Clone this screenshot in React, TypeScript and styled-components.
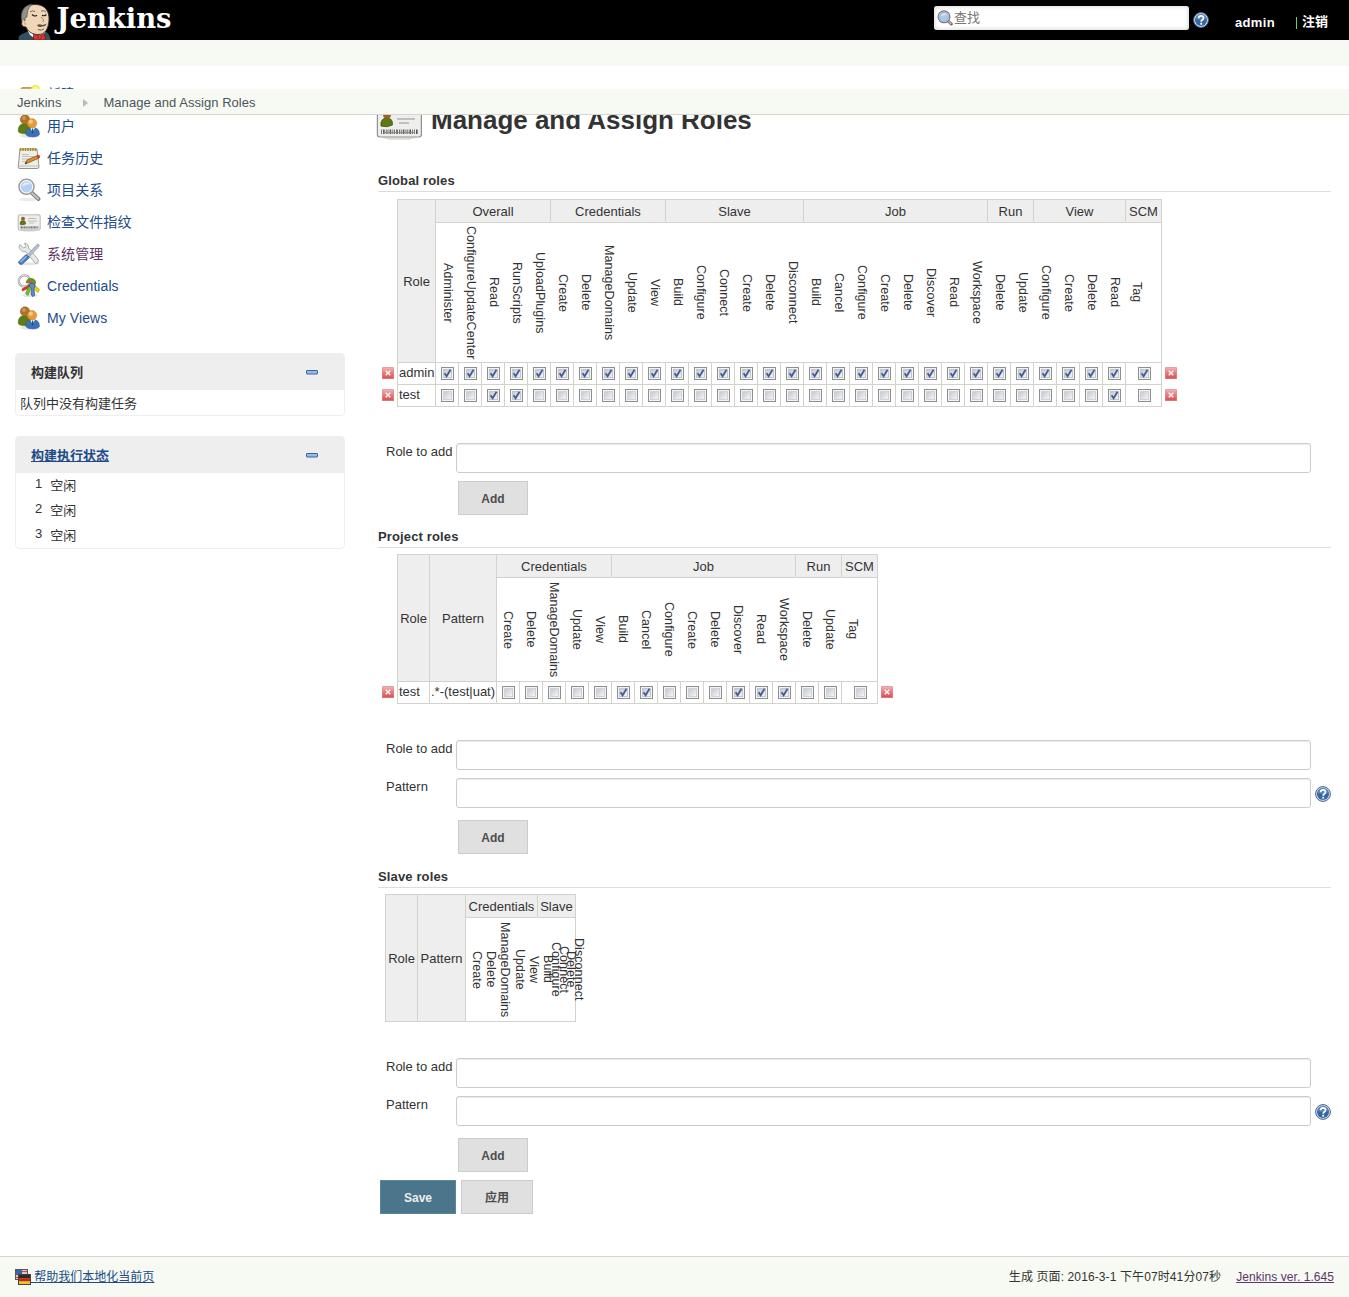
import React from "react";
import styled, { createGlobalStyle } from "styled-components";

const sans = `"Liberation Sans", Arial, "Noto Sans CJK SC", sans-serif`;
const line = "#d3d3cc";
const tint = "#f6faf2";

const Global = createGlobalStyle`
  * { box-sizing: border-box; }
  body { margin: 0; background: #fff; color: #333; font: 13px/16px ${sans}; }
  svg { display: block; flex: none; }
`;

const Page = styled.div`
  width: 1349px;
  height: 1297px;
  display: flex;
  flex-direction: column;
  overflow: hidden;
`;

/* ---------- header ---------- */
const Header = styled.header`
  flex: none;
  height: 40px;
  background: #000;
  display: flex;
  padding: 0 21px 0 18px;
  overflow: hidden;
`;
const Logo = styled.a`
  display: flex;
  margin-right: auto;
`;
const Search = styled.label`
  display: flex;
  align-items: center;
  width: 255px;
  height: 24px;
  margin: 6px 4px 0 0;
  padding: 0 3px;
  border-radius: 3px;
  background: #fff;
  box-shadow: inset 0 0 5px #ccc;
  gap: 1px;
`;
const SearchInput = styled.input`
  flex: 1;
  min-width: 0;
  border: 0;
  padding: 0;
  outline: 0;
  background: transparent;
  font: 13px/20px ${sans};
  &::placeholder { color: #777; opacity: 1; }
`;
const HelpSlot = styled.span`
  display: block;
  margin-top: ${(p: { $top: number }) => p.$top}px;
`;
const UserLink = styled.a`
  margin: 15px 0 0 26px;
  color: #fff;
  font-weight: bold;
  letter-spacing: 0.35px;
`;
const Logout = styled.a`
  display: flex;
  gap: 5px;
  align-items: center;
  height: 16px;
  margin: 14px 0 0 21px;
  color: #fff;
  font-weight: bold;
  &::before { content: ""; width: 1px; height: 12px; margin-top: 2px; background: #6fce5f; }
`;
const Band = styled.div`
  flex: none;
  height: 26px;
  background: ${tint};
`;
const Breadcrumbs = styled.nav`
  position: absolute;
  z-index: 2;
  top: 89px;
  left: 0;
  width: 1349px;
  height: 26px;
  display: flex;
  align-items: center;
  padding: 2px 17px 0;
  background: ${tint};
  border-bottom: 1px solid #d3d7cf;
  color: #4d545d;
  letter-spacing: 0.05px;
`;
const Arrow = styled.span`
  border: 4px solid transparent;
  border-left: 5px solid #bbb;
  border-right: 0;
  margin: 0 15px 0 22px;
`;

/* ---------- sidebar ---------- */
const Body = styled.div`
  flex: 1;
  min-height: 0;
  display: flex;
`;
const Side = styled.aside`
  flex: none;
  width: 375px;
  padding: 12px 30px 0 15px;
`;
const Task = styled.a<{ $visited?: boolean }>`
  display: flex;
  align-items: center;
  gap: 6px;
  height: 32px;
  padding-left: 2px;
  font-size: 14px;
  letter-spacing: 0.08px;
  color: ${(p) => (p.$visited ? "#5c3566" : "#204a87")};
`;
const Panel = styled.section<{ $top: number }>`
  margin-top: ${(p) => p.$top}px;
  border: 1px solid #eee;
  border-radius: 4px;
  overflow: hidden;
`;
const PanelHead = styled.div`
  height: 36px;
  background: #eee;
  display: flex;
  align-items: center;
  justify-content: space-between;
  padding: 0 26px 0 15px;
  font-weight: bold;
`;
const PanelTitle = styled.span<{ $link?: boolean }>`
  padding-top: 2px;
  ${(p) => p.$link && "color: #204a87; text-decoration: underline;"}
`;
const Empty = styled.div`
  height: 25px;
  padding: 6px 4px 0;
`;
const Executor = styled.div`
  display: flex;
  gap: 8px;
  height: 25px;
  padding: 3px 0 0 19px;
`;
const ExecutorState = styled.span`
  padding-top: 2px;
`;

/* ---------- main ---------- */
const Main = styled.main`
  flex: 1;
  padding: 31px 18px 0 0;
`;
const Title = styled.div`
  height: 48px;
  display: flex;
  gap: 8px;
`;
const H1 = styled.h1`
  margin: 8px 0 0;
  font: bold 26px/30px ${sans};
  letter-spacing: -0.02px;
  color: #333;
`;
const SectionHead = styled.h2<{ $top: number; $gap: number }>`
  height: 23px;
  margin: ${(p) => p.$top}px 0 ${(p) => p.$gap}px 3px;
  padding-top: 1px;
  border-bottom: 1px solid #ddd;
  font: bold 13px/22px ${sans};
  letter-spacing: 0.14px;
`;
const TableWrap = styled.div<{ $left: number }>`
  display: flex;
  align-items: flex-end;
  gap: 3px;
  padding-left: ${(p) => p.$left}px;
`;
const DeleteColumn = styled.div`
  display: flex;
  flex-direction: column;
  gap: 10px;
  padding-bottom: 6px;
`;
const Matrix = styled.div<{ $cols: string; $rows: string }>`
  display: grid;
  grid-template-columns: ${(p) => p.$cols};
  grid-template-rows: ${(p) => p.$rows};
  border-right: 1px solid ${line};
  border-bottom: 1px solid ${line};
`;
const HeadCell = styled.div<{ $span?: number; $tall?: boolean }>`
  grid-column: span ${(p) => p.$span || 1};
  grid-row: span ${(p) => (p.$tall ? 2 : 1)};
  display: flex;
  align-items: center;
  justify-content: center;
  white-space: nowrap;
  padding-top: 1px;
  background: #eee;
  border-left: 1px solid ${line};
  border-top: 1px solid ${line};
`;
const PermGroup = styled.div<{ $span: number; $first: boolean; $pad: number }>`
  grid-column: span ${(p) => p.$span};
  display: flex;
  min-width: 0;
  border-top: 1px solid ${line};
  border-left: 1px solid ${(p) => (p.$first ? line : "transparent")};
  padding-left: ${(p) => p.$pad}px;
`;
const PermName = styled.div<{ $w: number }>`
  flex: none;
  width: ${(p) => p.$w}px;
  display: flex;
  align-items: center;
`;
const Vertical = styled.span`
  flex: none;
  writing-mode: vertical-rl;
  font-size: 12.5px;
  letter-spacing: 0.07px;
  line-height: 16px;
  white-space: nowrap;
`;
const Cell = styled.div<{ $pad: number }>`
  display: flex;
  align-items: center;
  white-space: nowrap;
  border-left: 1px solid ${line};
  border-top: 1px solid ${line};
  padding-left: ${(p) => p.$pad}px;
`;
const CellText = styled.span`
  margin-top: -1px;
`;
const Form = styled.form`
  display: flex;
  flex-direction: column;
  gap: 8px;
  margin: 36px 0 0 11px;
`;
const FieldRow = styled.div`
  display: flex;
  height: 30px;
`;
const FieldLabel = styled.label`
  width: 70px;
  padding-top: 1px;
`;
const Input = styled.input`
  width: 855px;
  height: 30px;
  margin-right: 4px;
  border: 1px solid #ccc;
  border-radius: 3px;
  box-shadow: inset 0 1px 1px rgba(0, 0, 0, 0.08);
  outline: 0;
`;
const Button = styled.button<{ $w: number; $primary?: boolean }>`
  width: ${(p) => p.$w}px;
  height: 34px;
  padding: 2px 0 0;
  border: 1px solid ${(p) => (p.$primary ? "#5788a1" : "#ccc")};
  background: ${(p) => (p.$primary ? "#4b758b" : "#e0e0e0")};
  color: ${(p) => (p.$primary ? "#eee" : "#4d4d4d")};
  font: bold 12px/16px ${sans};
`;
const AddSlot = styled.div<{ $top: number }>`
  display: flex;
  margin: ${(p) => p.$top}px 0 0 72px;
`;
const Actions = styled.div`
  display: flex;
  gap: 5px;
  margin: 8px 0 0 5px;
`;

/* ---------- footer ---------- */
const Footer = styled.footer`
  flex: none;
  height: 41px;
  border-top: 1px solid #d3d7cf;
  background: ${tint};
  display: flex;
  align-items: center;
  padding: 0 15px;
  font-size: 12px;
`;
const Translate = styled.a`
  display: flex;
  align-items: center;
  margin-right: auto;
  color: #204a87;
  text-decoration: underline;
  white-space: pre;
`;
const Generated = styled.span`
  letter-spacing: 0.11px;
`;
const Version = styled.a`
  margin-left: 15px;
  color: #5c3566;
  text-decoration: underline;
  letter-spacing: 0.06px;
`;

/* ---------- icons ---------- */
const LogoArt = () => (
  <svg width="156" height="40" viewBox="0 0 156 40">
    <path d="M0.500 40L1 36Q5 33 10 31.500L28 32Q32 34 32.500 40Z" fill="#335061" />
    <path d="M9 29L12 35L19 40H25L27 31Z" fill="#fff" />
    <path d="M4 22C1.500 10 7 4.500 17 4.500C27 4.500 31.500 11 31 20C30.500 29 27 34.500 20 34.500C13 34.500 10 31 8 27C4 27 3 24 4 22Z" fill="#f0d6b7" stroke="#3a3026" strokeWidth="0.900" />
    <path d="M3.500 20C2.500 10 7 4.500 15 4.300C10.500 7 9.500 10 9 17L7 18V21C5 19 4.500 19 3.500 20Z" fill="#8f8f8c" stroke="#444" strokeWidth="0.600" />
    <path d="M12 12Q14.500 10 17 11.500M23 11Q26 10 28 12" fill="none" stroke="#6d6b6d" strokeWidth="1" />
    <path d="M14 14.500Q16.500 17 19 15.200M24 15.200Q26.500 16.500 28.500 14.500" fill="none" stroke="#222" strokeWidth="1.100" />
    <path d="M23 17Q27 20 25 22" fill="none" stroke="#a6764f" strokeWidth="0.900" />
    <path d="M19 25Q22 23.500 24 25Q27 24.500 28.500 23.500Q28 27 24 26.500Q20 28 19 25Z" fill="#555" />
    <path d="M20 29.500Q23.500 31 26 29" fill="none" stroke="#6d4c3d" strokeWidth="0.900" />
    <path d="M6 21.500Q7.500 22.500 7 25" fill="none" stroke="#b98b67" strokeWidth="0.800" />
    <path d="M15.500 34L21 36L26.500 33.500L27.500 40H15.500Z" fill="#d33833" stroke="#5f1a15" strokeWidth="0.700" />
    <ellipse cx="21.700" cy="37" rx="1.700" ry="2.200" fill="#ef3d3a" stroke="#7f1d19" strokeWidth="0.700" />
    <text x="38.500" y="28.400" fill="#fff" fontFamily="DejaVu Serif, serif" fontWeight="bold" fontSize="27" textLength="115" lengthAdjust="spacingAndGlyphs">Jenkins</text>
  </svg>
);
const HelpIcon = () => (
  <svg width="16" height="16" viewBox="0 0 16 16">
    <circle cx="8" cy="8" r="7.400" fill="#d7e0ea" stroke="#47648c" strokeWidth="1" />
    <circle cx="8" cy="8" r="6" fill="#3465a4" />
    <path d="M2.500 7A5.500 5.500 0 0 1 13.500 7Q8 9 2.500 7Z" fill="#6f94c4" opacity="0.600" />
    <path d="M5.600 6.200Q5.800 3.800 8 3.800Q10.500 3.800 10.500 6Q10.500 7.200 9.200 8Q8.200 8.600 8.200 9.800" fill="none" stroke="#fff" strokeWidth="1.700" />
    <rect x="7.300" y="10.800" width="1.800" height="1.900" fill="#fff" />
  </svg>
);
const SearchLens = () => (
  <svg width="16" height="16" viewBox="0 0 16 16">
    <path d="M11 11L14.300 14" stroke="#666" strokeWidth="3" strokeLinecap="round" />
    <path d="M11.500 11.500L14 13.700" stroke="#c4c4c0" strokeWidth="1.200" strokeLinecap="round" />
    <circle cx="7" cy="6.800" r="5.900" fill="#e8ebe8" stroke="#777" strokeWidth="1.200" />
    <circle cx="7" cy="6.800" r="4.500" fill="#a9c8f0" stroke="#8a9bb0" strokeWidth="0.600" />
    <path d="M3.800 6.500Q4.500 3.500 7.500 3.500Q9.500 3.500 10 4.800Q6.500 4.800 3.800 6.500Z" fill="#dcebfb" />
  </svg>
);
const Lens = () => (
  <svg width="24" height="24" viewBox="0 0 24 24">
    <ellipse cx="11" cy="21.500" rx="9" ry="1.800" fill="#000" opacity="0.080" />
    <path d="M14.500 14.500L21.500 21" stroke="#777" strokeWidth="3.800" strokeLinecap="round" />
    <path d="M15 15L21.200 20.700" stroke="#c4c4c0" strokeWidth="2.200" strokeLinecap="round" />
    <circle cx="9.500" cy="8.800" r="7.500" fill="#b9d3f3" stroke="#9a9c97" strokeWidth="1.600" />
    <circle cx="9.500" cy="8.800" r="6.200" fill="#b4d0f3" stroke="#f2f4f4" strokeWidth="1.200" />
    <path d="M5 8.500Q6 4.500 10 4.500Q12.500 4.500 13.500 6Q8.500 6 5 8.500Z" fill="#e4effb" />
  </svg>
);
const People = () => (
  <svg width="24" height="24" viewBox="0 0 24 24">
    <ellipse cx="13" cy="22" rx="10" ry="1.600" fill="#000" opacity="0.100" />
    <path d="M1.200 17Q1.200 9.500 7.500 9.500Q14 9.500 14 17Q13 19.800 7.500 19.800Q2 19.800 1.200 17Z" fill="#5f7a12" stroke="#4d660c" strokeWidth="0.500" />
    <circle cx="8" cy="5.500" r="4.700" fill="#a9732a" stroke="#8a5c1c" strokeWidth="0.500" />
    <circle cx="6.900" cy="4" r="2" fill="#d5a768" opacity="0.700" />
    <path d="M8.800 20.500Q8.500 13.500 15.500 13.500Q22.800 13.500 22.500 20.500Q20.500 23 15.800 23Q10.500 23 8.800 20.500Z" fill="#3c70b4" stroke="#2d5c9c" strokeWidth="0.500" />
    <path d="M13.300 13.600L15.700 19L18 13.600Z" fill="#fff" />
    <path d="M15.200 14.500H16.200L16.700 18L15.700 20L14.700 18Z" fill="#204a87" />
    <circle cx="15" cy="9.300" r="4.700" fill="#e79a35" stroke="#c47c1c" strokeWidth="0.500" />
    <circle cx="13.900" cy="7.700" r="2.100" fill="#fbd391" opacity="0.800" />
  </svg>
);
const Notepad = () => (
  <svg width="24" height="24" viewBox="0 0 24 24">
    <path d="M3 3H20L22 21Q22 22.500 20 22.500H3Q1 22.500 1.200 21Z" fill="#eeeeec" stroke="#888a85" strokeWidth="0.900" />
    <path d="M1.500 20H21.600" stroke="#bbb" strokeWidth="1" />
    <path d="M3.500 2V5M6 2V5M8.500 2V5M11 2V5M13.500 2V5M16 2V5M18.500 2V5" stroke="#a98a12" strokeWidth="1.500" />
    <path d="M5 8.500H12M5 10.500H17M5 13H14M5 15.500H9" stroke="#b9bbb6" strokeWidth="0.900" />
    <path d="M8 18L10 14L20.500 9.500L22 12L11.500 16.700Z" fill="#e0902e" stroke="#7d4b0a" strokeWidth="0.700" />
    <path d="M8 18L9.200 15.700L10.200 17.200Z" fill="#333" />
    <path d="M19.500 9.900L21.500 8.800Q23.500 9.500 23 11.500L21 12.500Z" fill="#d4362b" />
  </svg>
);
const IdCard = ({ size }: { size: number }) => (
  <svg width={size} height={size} viewBox="0 0 24 24">
    <path d="M3 20.300H21L17 21.400H7Z" fill="#000" opacity="0.150" />
    <rect x="1.200" y="4.800" width="22" height="15.200" rx="1.200" fill="#eeeeec" stroke="#8f918c" strokeWidth="0.600" />
    <path d="M3 14.500Q2.600 10.500 6 10.500Q9 10.500 8.700 14Q6 15.500 3 14.500Z" fill="#5f7a12" stroke="#3c5208" strokeWidth="0.400" />
    <circle cx="6" cy="8.700" r="2" fill="#a05f24" />
    <path d="M11 8.500H19M11 11H20M12 13H17" stroke="#b0b2ad" strokeWidth="0.800" />
    <path d="M3 17.400H21.500" stroke="#555" strokeWidth="2.200" strokeDasharray="0.400 0.600 0.800 0.600 0.400 0.500" />
    <path d="M4 17.800H20" stroke="#888" strokeWidth="0.500" />
  </svg>
);
const Tools = () => (
  <svg width="24" height="24" viewBox="0 0 24 24">
    <ellipse cx="12" cy="21.800" rx="10" ry="1.500" fill="#000" opacity="0.100" />
    <path d="M3 2.500L6.500 6L9 4.800L7.500 1.200Q11.500 1.500 11.600 6L21.500 18Q22 21.500 18.500 21.500L9 9.800Q4 10.500 2 5Z" fill="#e8e9e6" stroke="#a2a49f" strokeWidth="0.900" />
    <path d="M10 13.500L18.500 4L21 1.800L22.500 3.500L20.500 6L12 15Z" fill="#b5c0cc" stroke="#8b939c" strokeWidth="0.700" />
    <path d="M2 19.500L9 12.500L12.500 15.500L5.500 22Q3.500 23 2 21.500Q1 20.500 2 19.500Z" fill="#4a7fc4" stroke="#2c5a9a" strokeWidth="0.700" />
    <path d="M3.500 20L9.500 14.300" stroke="#9dbfe8" strokeWidth="1.200" />
  </svg>
);
const Keys = () => (
  <svg width="24" height="24" viewBox="0 0 24 24">
    <ellipse cx="13" cy="21.500" rx="8" ry="1.600" fill="#000" opacity="0.100" />
    <circle cx="7.500" cy="7" r="5.700" fill="none" stroke="#999b96" strokeWidth="2.200" />
    <circle cx="7.500" cy="7" r="5.700" fill="none" stroke="#eee" strokeWidth="0.900" />
    <path d="M15 9L22.500 15.500L21 18.500L15 13Z" fill="#edd400" stroke="#a48c00" strokeWidth="0.600" />
    <path d="M12 11L5 15L5.500 17L13 13.500Z" fill="#e03a2f" stroke="#a40000" strokeWidth="0.500" />
    <path d="M12 12L8.500 19.500L11 21.500L14.500 13Z" fill="#6cc526" stroke="#3f8507" strokeWidth="0.600" />
    <path d="M9 9Q10 4 14.500 4.500Q19 5 18.500 9.500L17 12Q12 6.500 9 9Z" fill="#52a30f" stroke="#39740a" strokeWidth="0.600" />
    <path d="M10 9Q13 5.500 17 9.500" fill="none" stroke="#e0562f" strokeWidth="1.800" />
    <path d="M12 10Q15.500 7.500 18 11Q18.500 13 17 14.500L17.500 21.500L15.500 22.500L14 20L14.500 14.500Q12 13 12 10Z" fill="#5c8ccb" stroke="#204a87" strokeWidth="0.700" />
  </svg>
);
const NewItem = () => (
  <svg width="24" height="24" viewBox="0 0 24 24">
    <path d="M5 5.500H19L23 9V21H2V9Z" fill="#d3a65e" stroke="#c49a58" strokeWidth="1" />
    <path d="M2 9.500H23" stroke="#8f6320" />
    <circle cx="18.500" cy="7.500" r="3.700" fill="#fff7a0" stroke="#f5e92c" strokeWidth="1.500" />
  </svg>
);
const Minus = () => (
  <svg width="12" height="5" viewBox="0 0 12 5">
    <rect x="0.500" y="0.500" width="11" height="3.500" rx="0.500" fill="#9dbbe0" stroke="#3465a4" />
  </svg>
);
const DeleteIcon = () => (
  <svg width="12" height="12" viewBox="0 0 12 12">
    <defs>
      <linearGradient id="del" x1="0" y1="0" x2="0" y2="1">
        <stop offset="0" stopColor="#f2bcbc" />
        <stop offset="0.500" stopColor="#e47a7a" />
        <stop offset="1" stopColor="#d94c4c" />
      </linearGradient>
    </defs>
    <rect width="12" height="12" rx="1" fill="url(#del)" />
    <rect x="0.500" y="0.500" width="11" height="11" rx="0.800" fill="none" stroke="#e09090" strokeOpacity="0.600" />
    <path d="M3.700 3.700L8.300 8.300M8.300 3.700L3.700 8.300" stroke="#fbeeee" strokeWidth="1.600" />
  </svg>
);
const Check = ({ on }: { on: boolean }) => (
  <svg width="13" height="13" viewBox="0 0 13 13">
    <defs>
      <linearGradient id="box" x1="0" y1="0" x2="1" y2="1">
        <stop offset="0.150" stopColor="#c9cdd4" />
        <stop offset="1" stopColor="#f8f8f8" />
      </linearGradient>
    </defs>
    <rect x="0.500" y="0.500" width="12" height="12" fill="#f4f4f4" stroke="#8e8f8f" />
    <rect x="2.500" y="2.500" width="8" height="8" fill="url(#box)" stroke={on ? "#c2c6cf" : "#cfd2d8"} />
    {on && <path d="M3.600 6.300L5.600 9.300L9.500 2.800" fill="none" stroke="#445a99" strokeWidth="1.800" />}
  </svg>
);
const Flags = () => (
  <svg width="16" height="16" viewBox="0 0 16 16">
    <rect x="0.500" y="0.500" width="12" height="10" fill="#eee" stroke="#555753" />
    <path d="M1 5.500H12M1 8.500H12M7 2.500H12" stroke="#c44" strokeWidth="1.300" />
    <rect x="1" y="1" width="6" height="5" fill="#3465a4" />
    <rect x="3.500" y="5.500" width="12" height="10" fill="#e8c928" stroke="#444" />
    <rect x="4" y="6" width="11" height="3.200" fill="#2b2b2b" />
    <rect x="4" y="9.200" width="11" height="3" fill="#c9241d" />
  </svg>
);

/* ---------- data ---------- */
type Group = { name: string; perms: string[]; widths: number };
type Row = { name: string; pattern?: string; on: number[] | "all" };

const creds = ["Create", "Delete", "ManageDomains", "Update", "View"];
const job = ["Build", "Cancel", "Configure", "Create", "Delete", "Discover", "Read", "Workspace"];

const globalGroups: Group[] = [
  { name: "Overall", perms: ["Administer", "ConfigureUpdateCenter", "Read", "RunScripts", "UploadPlugins"], widths: 23 },
  { name: "Credentials", perms: creds, widths: 23 },
  { name: "Slave", perms: ["Build", "Configure", "Connect", "Create", "Delete", "Disconnect"], widths: 23 },
  { name: "Job", perms: job, widths: 23 },
  { name: "Run", perms: ["Delete", "Update"], widths: 23 },
  { name: "View", perms: ["Configure", "Create", "Delete", "Read"], widths: 23 },
  { name: "SCM", perms: ["Tag"], widths: 36 },
];
const projectGroups: Group[] = [
  { name: "Credentials", perms: creds, widths: 23 },
  { name: "Job", perms: job, widths: 23 },
  { name: "Run", perms: ["Delete", "Update"], widths: 23 },
  { name: "SCM", perms: ["Tag"], widths: 36 },
];
const slaveGroups: Group[] = [
  { name: "Credentials", perms: creds, widths: 14.4 },
  { name: "Slave", perms: ["Build", "Configure", "Connect", "Delete", "Disconnect"], widths: 7.6 },
];

type MatrixProps = { left: number; heads: [string, number][]; groups: Group[]; rows: Row[]; nameHeight: number; pad: number };

const RoleMatrix = ({ left, heads, groups, rows, nameHeight, pad }: MatrixProps) => {
  const widths = groups.flatMap((g) => g.perms.map(() => g.widths));
  const cols = [...heads.map((h) => h[1]), ...widths].map((w) => `${w}px`).join(" ");
  const heights = ["23px", `${nameHeight}px`, ...rows.map(() => "22px")].join(" ");
  const deletes = rows.length > 0 && <DeleteColumn>{rows.map((r) => <DeleteIcon key={r.name} />)}</DeleteColumn>;
  return (
    <TableWrap $left={left}>
      {deletes}
      <Matrix $cols={cols} $rows={heights}>
        {heads.map(([h]) => <HeadCell key={h} $tall>{h}</HeadCell>)}
        {groups.map((g) => <HeadCell key={g.name} $span={g.perms.length}>{g.name}</HeadCell>)}
        {groups.map((g, i) => (
          <PermGroup key={g.name} $span={g.perms.length} $first={i === 0} $pad={g.widths > 23 ? 2.5 : pad}>
            {g.perms.map((p) => <PermName key={p} $w={g.widths}><Vertical>{p}</Vertical></PermName>)}
          </PermGroup>
        ))}
        {rows.map((r) => (
          <React.Fragment key={r.name}>
            <Cell $pad={1}><CellText>{r.name}</CellText></Cell>
            {r.pattern && <Cell $pad={1}><CellText>{r.pattern}</CellText></Cell>}
            {widths.map((w, i) => (
              <Cell key={i} $pad={w > 23 ? 12 : 5}><Check on={r.on === "all" || r.on.includes(i)} /></Cell>
            ))}
          </React.Fragment>
        ))}
      </Matrix>
      {deletes}
    </TableWrap>
  );
};

const RoleForm = ({ pattern }: { pattern?: boolean }) => (
  <Form>
    <FieldRow><FieldLabel>Role to add</FieldLabel><Input /></FieldRow>
    {pattern && (
      <FieldRow>
        <FieldLabel>Pattern</FieldLabel><Input />
        <HelpSlot $top={8}><HelpIcon /></HelpSlot>
      </FieldRow>
    )}
    <AddSlot $top={pattern ? 4 : 0}><Button type="button" $w={70}>Add</Button></AddSlot>
  </Form>
);

export default function App() {
  return (
    <Page>
      <Global />
      <Header>
        <Logo><LogoArt /></Logo>
        <Search><SearchLens /><SearchInput placeholder="查找" /></Search>
        <HelpSlot $top={12}><HelpIcon /></HelpSlot>
        <UserLink>admin</UserLink>
        <Logout>注销</Logout>
      </Header>
      <Band />
      <Breadcrumbs>Jenkins<Arrow />Manage and Assign Roles</Breadcrumbs>
      <Body>
        <Side>
          <Task><NewItem />新建</Task>
          <Task><People />用户</Task>
          <Task><Notepad />任务历史</Task>
          <Task><Lens />项目关系</Task>
          <Task><IdCard size={24} />检查文件指纹</Task>
          <Task $visited><Tools />系统管理</Task>
          <Task><Keys />Credentials</Task>
          <Task><People />My Views</Task>
          <Panel $top={19}>
            <PanelHead><PanelTitle>构建队列</PanelTitle><Minus /></PanelHead>
            <Empty>队列中没有构建任务</Empty>
          </Panel>
          <Panel $top={20}>
            <PanelHead><PanelTitle $link>构建执行状态</PanelTitle><Minus /></PanelHead>
            {[1, 2, 3].map((n) => (
              <Executor key={n}>{n}<ExecutorState>空闲</ExecutorState></Executor>
            ))}
          </Panel>
        </Side>
        <Main>
          <Title><IdCard size={48} /><H1>Manage and Assign Roles</H1></Title>
          <SectionHead $top={24} $gap={7}>Global roles</SectionHead>
          <RoleMatrix left={7} heads={[["Role", 38]]} groups={globalGroups} nameHeight={140} pad={3.5}
            rows={[{ name: "admin", on: "all" }, { name: "test", on: [2, 3, 29] }]} />
          <RoleForm />
          <SectionHead $top={10} $gap={6}>Project roles</SectionHead>
          <RoleMatrix left={7} heads={[["Role", 32], ["Pattern", 67]]} groups={projectGroups} nameHeight={104} pad={3}
            rows={[{ name: "test", pattern: ".*-(test|uat)", on: [5, 6, 10, 11, 12] }]} />
          <RoleForm pattern />
          <SectionHead $top={11} $gap={6}>Slave roles</SectionHead>
          <RoleMatrix left={10} heads={[["Role", 32], ["Pattern", 48]]} groups={slaveGroups} nameHeight={104} pad={2.5} rows={[]} />
          <RoleForm pattern />
          <Actions>
            <Button $w={76} $primary>Save</Button>
            <Button $w={72}>应用</Button>
          </Actions>
        </Main>
      </Body>
      <Footer>
        <Translate><Flags /> 帮助我们本地化当前页</Translate>
        <Generated>生成 页面: 2016-3-1 下午07时41分07秒</Generated>
        <Version>Jenkins ver. 1.645</Version>
      </Footer>
    </Page>
  );
}
